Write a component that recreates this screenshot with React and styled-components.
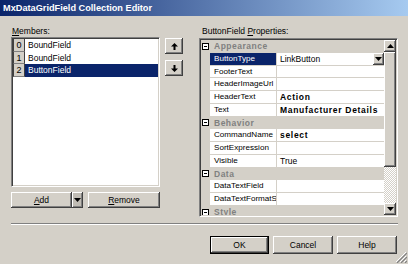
import React from "react";
import styled, { createGlobalStyle } from "styled-components";

const Global = createGlobalStyle`
  html, body { margin: 0; padding: 0; background: #d4d0c8; }
  body { font-family: "Liberation Sans", Arial, sans-serif; font-size: 8.5px; color: #000; }
`;

const members = ["BoundField", "BoundField", "ButtonField"];

const groups = [
  {
    name: "Appearance",
    rows: [
      { name: "ButtonType", value: "LinkButton", selected: true, dropdown: true },
      { name: "FooterText", value: "" },
      { name: "HeaderImageUrl", value: "" },
      { name: "HeaderText", value: "Action", bold: true },
      { name: "Text", value: "Manufacturer Details", bold: true },
    ],
  },
  {
    name: "Behavior",
    rows: [
      { name: "CommandName", value: "select", bold: true },
      { name: "SortExpression", value: "" },
      { name: "Visible", value: "True" },
    ],
  },
  {
    name: "Data",
    rows: [
      { name: "DataTextField", value: "" },
      { name: "DataTextFormatString", value: "" },
    ],
  },
  { name: "Style", rows: [] },
];

function Arrow({ down }) {
  return (
    <svg width="7" height="7" viewBox="0 0 7 7" style={{ transform: down ? "rotate(180deg)" : "none" }}>
      <path d="M3.5 0 L7 3.5 L4.5 3.5 L4.5 7 L2.5 7 L2.5 3.5 L0 3.5 Z" fill="#000" />
    </svg>
  );
}

function Tri({ up }) {
  return (
    <svg width="7" height="4" viewBox="0 0 7 4">
      <path d={up ? "M0 4 L7 4 L3.5 0 Z" : "M0 0 L7 0 L3.5 4 Z"} fill="#000" />
    </svg>
  );
}

export default function App() {
  return (
    <Window>
      <Global />
      <TitleBar>MxDataGridField Collection Editor</TitleBar>
      <Body>
        <Main>
          <LeftCol>
            <Label><u>M</u>embers:</Label>
            <ListRow>
              <ListBox>
                {members.map((m, i) => (
                  <Item key={i}>
                    <Index>{i}</Index>
                    <ItemText selected={i === 2}>{m}</ItemText>
                  </Item>
                ))}
              </ListBox>
              <MoveCol>
                <SmallButton><Arrow /></SmallButton>
                <SmallButton><Arrow down /></SmallButton>
              </MoveCol>
            </ListRow>
            <ActionRow>
              <SplitButton>
                <Button width={61}><u>A</u>dd</Button>
                <DropPart><Tri /></DropPart>
              </SplitButton>
              <Button width={72}><u>R</u>emove</Button>
            </ActionRow>
          </LeftCol>
          <RightCol>
            <Label indent>ButtonField <u>P</u>roperties:</Label>
            <Grid>
              <GridRows>
                {groups.map((g) => (
                  <React.Fragment key={g.name}>
                    <Category>
                      <Gutter><MinusBox /></Gutter>
                      <CatName>{g.name}</CatName>
                    </Category>
                    {g.rows.map((r) => (
                      <PropRow key={r.name}>
                        <Gutter />
                        <NameCell selected={r.selected}>{r.name}</NameCell>
                        <ValueCell bold={r.bold}>
                          <span>{r.value}</span>
                          {r.dropdown && <ValueDrop><Tri /></ValueDrop>}
                        </ValueCell>
                      </PropRow>
                    ))}
                  </React.Fragment>
                ))}
              </GridRows>
              <ScrollBar>
                <ScrollBtn><Tri up /></ScrollBtn>
                <Thumb />
                <Track />
                <ScrollBtn><Tri /></ScrollBtn>
              </ScrollBar>
            </Grid>
          </RightCol>
        </Main>
        <Separator />
        <Footer>
          <Button width={59} height={18} isDefault>OK</Button>
          <Button width={60} height={18}>Cancel</Button>
          <Button width={60} height={18}>Help</Button>
        </Footer>
      </Body>
      <Grip>
        <svg width="12" height="12" viewBox="0 0 12 12">
          <path d="M11 1 L1 11 M11 5 L5 11 M11 9 L9 11" stroke="#fff" strokeWidth="1" />
          <path d="M12 2 L2 12 M12 6 L6 12 M12 10 L10 12" stroke="#808080" strokeWidth="1.2" />
        </svg>
      </Grip>
    </Window>
  );
}

const Window = styled.div`
  position: relative;
  width: 408px;
  height: 264px;
  overflow: hidden;
  background: #d4d0c8;
`;

const TitleBar = styled.div`
  height: 16px;
  line-height: 16px;
  padding-left: 3px;
  font-size: 9.2px;
  font-weight: bold;
  color: #fff;
  background: linear-gradient(to right, #0a246a, #a6caf0);
  border-bottom: 1px solid #d4d0c8;
  white-space: nowrap;
`;

const Body = styled.div`
  padding: 8px 10px 0 11px;
`;

const Main = styled.div`
  display: flex;
  align-items: flex-start;
`;

const LeftCol = styled.div`
  width: 172px;
  display: flex;
  flex-direction: column;
`;

const RightCol = styled.div`
  margin-left: 16px;
  width: 199px;
  display: flex;
  flex-direction: column;
`;

const Label = styled.div`
  height: 12px;
  line-height: 12px;
  padding-left: ${(p) => (p.indent ? "3px" : "1px")};
  white-space: nowrap;
`;

const ListRow = styled.div`
  display: flex;
  gap: 5px;
`;

const ListBox = styled.div`
  width: 149px;
  height: 150px;
  box-sizing: border-box;
  background: #fff;
  border: 1px solid;
  border-color: #808080 #fff #fff #808080;
  box-shadow: inset 1px 1px #404040, inset -1px -1px #d4d0c8;
  padding: 1px 1px 0 1px;
`;

const Item = styled.div`
  display: flex;
  height: 12.5px;
  align-items: stretch;
`;

const Index = styled.div`
  width: 12px;
  box-sizing: border-box;
  background: #d4d0c8;
  border-left: 1px solid #404040;
  border-right: 1px solid #404040;
  border-bottom: 1px solid #808080;
  text-align: center;
  line-height: 12px;
  font-size: 9px;
`;

const ItemText = styled.div`
  flex: 1;
  padding-left: 3px;
  line-height: 12.5px;
  background: ${(p) => (p.selected ? "#0a246a" : "#fff")};
  color: ${(p) => (p.selected ? "#fff" : "#000")};
`;

const MoveCol = styled.div`
  display: flex;
  flex-direction: column;
  gap: 6px;
  padding-top: 1px;
`;

const raised = `
  background: #d4d0c8;
  box-shadow: inset -1px -1px #404040, inset 1px 1px #fff, inset -2px -2px #808080, inset 2px 2px #d4d0c8;
`;

const SmallButton = styled.div`
  width: 18px;
  height: 16px;
  ${raised}
  display: flex;
  align-items: center;
  justify-content: center;
`;

const ActionRow = styled.div`
  display: flex;
  gap: 5px;
  margin-top: 5px;
`;

const SplitButton = styled.div`
  display: flex;
`;

const Button = styled.div`
  width: ${(p) => p.width}px;
  height: ${(p) => p.height || 16}px;
  box-sizing: border-box;
  ${raised}
  display: flex;
  align-items: center;
  justify-content: center;
  white-space: nowrap;
  ${(p) =>
    p.isDefault &&
    `
    border: 1px solid #000;
    box-shadow: inset -1px -1px #404040, inset 1px 1px #fff, inset -2px -2px #808080;
  `}
`;

const DropPart = styled.div`
  width: 11px;
  height: 16px;
  box-sizing: border-box;
  background: #c0bcb4;
  box-shadow: inset -1px -1px #404040, inset 1px 1px #fff, inset -2px -2px #808080;
  display: flex;
  align-items: center;
  justify-content: center;
`;

const Grid = styled.div`
  margin-top: 1px;
  height: 179px;
  box-sizing: border-box;
  display: flex;
  background: #fff;
  border: 1px solid;
  border-color: #808080 #fff #fff #808080;
  box-shadow: inset 1px 1px #404040, inset -1px -1px #d4d0c8;
  padding: 1px;
  overflow: hidden;
`;

const GridRows = styled.div`
  flex: 1;
  overflow: hidden;
`;

const Category = styled.div`
  display: flex;
  height: 12.75px;
  align-items: center;
  background: #d4d0c8;
`;

const Gutter = styled.div`
  width: 9px;
  height: 100%;
  background: #d4d0c8;
  display: flex;
  align-items: center;
  justify-content: center;
  flex-shrink: 0;
`;

const MinusBox = styled.div`
  width: 7px;
  height: 7px;
  box-sizing: border-box;
  border: 1px solid #000;
  background: #fff;
  position: relative;
  &::after {
    content: "";
    position: absolute;
    left: 1px;
    right: 1px;
    top: 2px;
    height: 1px;
    background: #000;
  }
`;

const CatName = styled.div`
  padding-left: 4px;
  font-weight: bold;
  color: #808080;
  letter-spacing: 0.5px;
`;

const PropRow = styled.div`
  display: flex;
  height: 12.75px;
  box-sizing: border-box;
  border-bottom: 1px solid #d4d0c8;
`;

const NameCell = styled.div`
  width: 67px;
  box-sizing: border-box;
  padding-left: 4px;
  border-right: 1px solid #d4d0c8;
  line-height: 12px;
  font-size: 8.1px;
  white-space: nowrap;
  overflow: hidden;
  background: ${(p) => (p.selected ? "#0a246a" : "#fff")};
  color: ${(p) => (p.selected ? "#fff" : "#000")};
`;

const ValueCell = styled.div`
  flex: 1;
  display: flex;
  align-items: center;
  justify-content: space-between;
  padding-left: 3px;
  line-height: 12px;
  white-space: nowrap;
  overflow: hidden;
  font-weight: ${(p) => (p.bold ? "bold" : "normal")};
  letter-spacing: ${(p) => (p.bold ? "0.7px" : "0")};
`;

const ValueDrop = styled.div`
  width: 11px;
  height: 12px;
  ${raised}
  display: flex;
  align-items: center;
  justify-content: center;
`;

const ScrollBar = styled.div`
  width: 12px;
  display: flex;
  flex-direction: column;
  background: #d4d0c8;
`;

const ScrollBtn = styled.div`
  height: 12px;
  ${raised}
  display: flex;
  align-items: center;
  justify-content: center;
  flex-shrink: 0;
`;

const Thumb = styled.div`
  height: 115px;
  ${raised}
  flex-shrink: 0;
`;

const Track = styled.div`
  flex: 1;
  background: repeating-conic-gradient(#fff 0 25%, #d4d0c8 0 50%) 0 0 / 2px 2px;
`;

const Separator = styled.div`
  margin-top: 6px;
  height: 0;
  border-top: 1px solid #808080;
  border-bottom: 1px solid #fff;
`;

const Footer = styled.div`
  display: flex;
  justify-content: flex-end;
  gap: 4px;
  margin-top: 11px;
  padding-right: 1px;
`;

const Grip = styled.div`
  position: absolute;
  right: 1px;
  bottom: 1px;
  width: 12px;
  height: 12px;
`;
